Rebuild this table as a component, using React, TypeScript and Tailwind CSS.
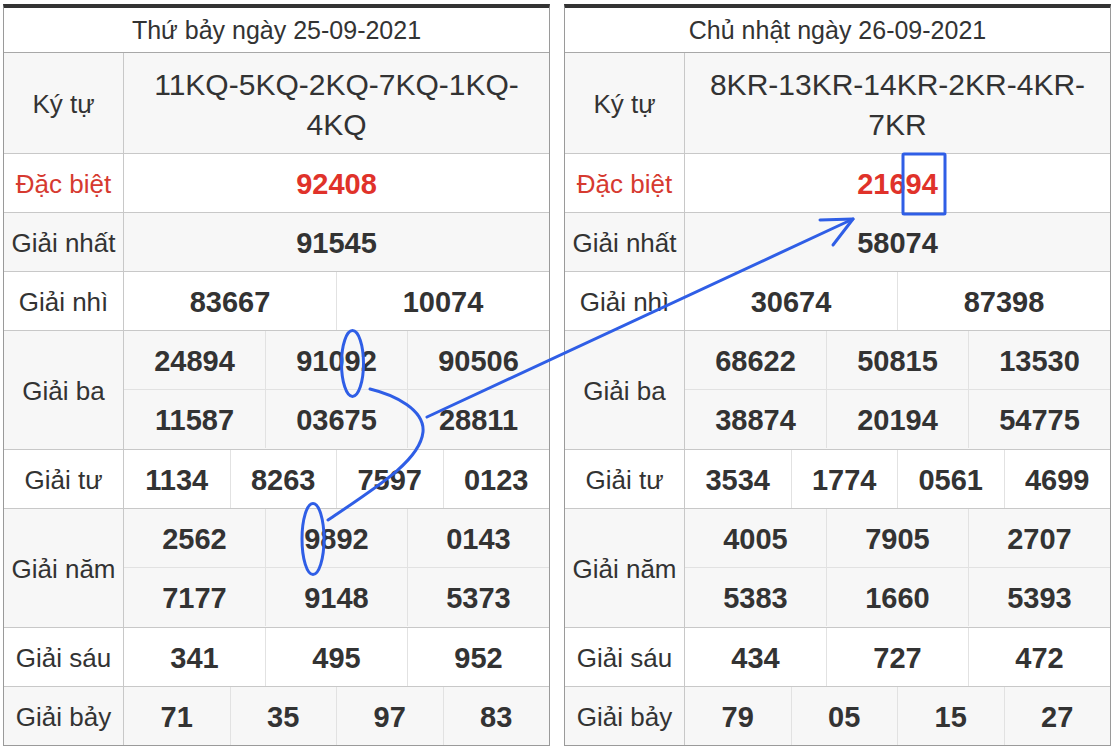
import React from "react";

type Day = {
  title: string;
  code: string;
  special: string;
  first: string;
  second: string[];
  third: string[];
  fourth: string[];
  fifth: string[];
  sixth: string[];
  seventh: string[];
};

const days: Day[] = [
  {
    title: "Thứ bảy ngày 25-09-2021",
    code: "11KQ-5KQ-2KQ-7KQ-1KQ-4KQ",
    special: "92408",
    first: "91545",
    second: ["83667", "10074"],
    third: ["24894", "91092", "90506", "11587", "03675", "28811"],
    fourth: ["1134", "8263", "7597", "0123"],
    fifth: ["2562", "9892", "0143", "7177", "9148", "5373"],
    sixth: ["341", "495", "952"],
    seventh: ["71", "35", "97", "83"],
  },
  {
    title: "Chủ nhật ngày 26-09-2021",
    code: "8KR-13KR-14KR-2KR-4KR-7KR",
    special: "21694",
    first: "58074",
    second: ["30674", "87398"],
    third: ["68622", "50815", "13530", "38874", "20194", "54775"],
    fourth: ["3534", "1774", "0561", "4699"],
    fifth: ["4005", "7905", "2707", "5383", "1660", "5393"],
    sixth: ["434", "727", "472"],
    seventh: ["79", "05", "15", "27"],
  },
];

function Label({ children, red = false }: { children: React.ReactNode; red?: boolean }) {
  return (
    <div
      className={`flex w-[120px] shrink-0 items-center justify-center border-r border-[#c8c8c8] pt-[3px] text-[26px] ${
        red ? "text-[#d63a30]" : "text-[#333]"
      }`}
    >
      {children}
    </div>
  );
}

// one line of numbers, split evenly
function Nums({ values, red = false }: { values: string[]; red?: boolean }) {
  return (
    <div className="flex h-[58px] flex-1">
      {values.map((v, i) => (
        <div
          key={i}
          className={`flex flex-1 items-center justify-center pt-[4px] text-[29px] font-bold ${
            i > 0 ? "border-l border-[#e2e2e2]" : ""
          } ${red ? "text-[#e0322a]" : "text-[#333]"}`}
        >
          {v}
        </div>
      ))}
    </div>
  );
}

function Row({
  label,
  values,
  gray = false,
  red = false,
  last = false,
}: {
  label: string;
  values: string[];
  gray?: boolean;
  red?: boolean;
  last?: boolean;
}) {
  return (
    <div className={`flex ${last ? "" : "border-b border-[#c8c8c8]"} ${gray ? "bg-[#f7f7f7]" : "bg-white"}`}>
      <Label red={red}>{label}</Label>
      <Nums values={values} red={red} />
    </div>
  );
}

function DoubleRow({ label, values, gray = false }: { label: string; values: string[]; gray?: boolean }) {
  return (
    <div className={`flex border-b border-[#c8c8c8] ${gray ? "bg-[#f7f7f7]" : "bg-white"}`}>
      <Label>{label}</Label>
      <div className="flex flex-1 flex-col">
        <div className="flex border-b border-[#e2e2e2]">
          <Nums values={values.slice(0, 3)} />
        </div>
        <div className="flex h-[59px]">
          <Nums values={values.slice(3)} />
        </div>
      </div>
    </div>
  );
}

function ResultTable({ day }: { day: Day }) {
  return (
    <div className="w-[547px] border-x border-b border-t-4 border-x-[#9a9a9a] border-b-[#9a9a9a] border-t-[#333]">
      <div className="flex h-[45px] items-center justify-center border-b border-[#a8a8a8] bg-white pt-[2px] text-[25px] text-[#333]">
        {day.title}
      </div>
      <div className="flex h-[101px] border-b border-[#c8c8c8] bg-[#f7f7f7]">
        <Label>Ký tự</Label>
        <div className="flex flex-1 items-center justify-center px-2 pt-[3px] text-center text-[30px] leading-[40px] text-[#333]">
          {day.code}
        </div>
      </div>
      <Row label="Đặc biệt" values={[day.special]} red />
      <Row label="Giải nhất" values={[day.first]} gray />
      <Row label="Giải nhì" values={day.second} />
      <DoubleRow label="Giải ba" values={day.third} gray />
      <Row label="Giải tư" values={day.fourth} />
      <DoubleRow label="Giải năm" values={day.fifth} gray />
      <Row label="Giải sáu" values={day.sixth} />
      <Row label="Giải bảy" values={day.seventh} gray last />
    </div>
  );
}

export default function App() {
  return (
    <div
      className="relative h-[749px] w-[1116px] overflow-hidden bg-white"
      style={{ fontFamily: '"Liberation Sans", Arial, sans-serif' }}
    >
      <div className="flex gap-[14px] pl-[3px] pt-[4px]">
        {days.map((d) => (
          <ResultTable key={d.title} day={d} />
        ))}
      </div>

      {/* hand-drawn markings over the tables */}
      <svg
        className="pointer-events-none absolute left-0 top-0"
        width="1116"
        height="749"
        viewBox="0 0 1116 749"
        fill="none"
        stroke="#2f5ee6"
        strokeWidth="3"
        strokeLinecap="round"
        strokeLinejoin="round"
      >
        <ellipse cx="352.5" cy="363.5" rx="11" ry="33" />
        <ellipse cx="313" cy="539" rx="11" ry="35.5" />
        <path d="M370 389 C 395 395, 425 410, 423 432 C 420 460, 380 485, 328 520" />
        <path d="M427 417 L853 219" />
        <path d="M820 220 L853 219 L833 245" />
        <rect x="903" y="154" width="42" height="60" rx="1" />
      </svg>
    </div>
  );
}
